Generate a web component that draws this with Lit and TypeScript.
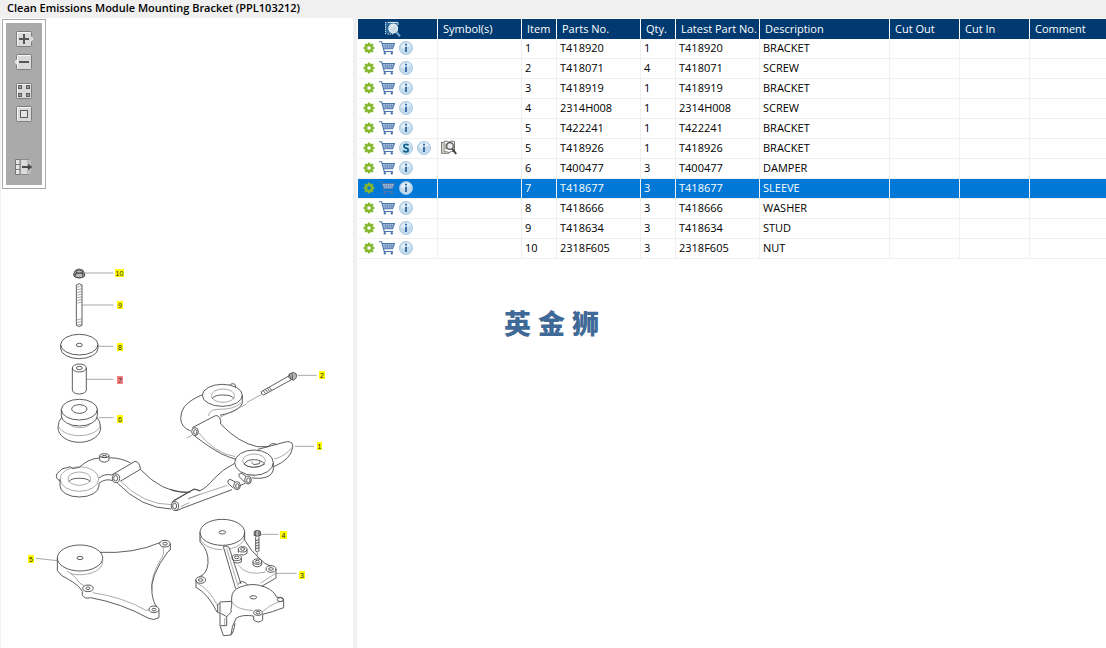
import { LitElement, html, css, svg } from "lit";
import { customElement, state } from "lit/decorators.js";
import { classMap } from "lit/directives/class-map.js";

interface Part {
  item: string;
  no: string;
  qty: number;
  name: string;
  super?: boolean;
}

const PARTS: Part[] = [
  { item: "1", no: "T418920", qty: 1, name: "BRACKET" },
  { item: "2", no: "T418071", qty: 4, name: "SCREW" },
  { item: "3", no: "T418919", qty: 1, name: "BRACKET" },
  { item: "4", no: "2314H008", qty: 1, name: "SCREW" },
  { item: "5", no: "T422241", qty: 1, name: "BRACKET" },
  { item: "5", no: "T418926", qty: 1, name: "BRACKET", super: true },
  { item: "6", no: "T400477", qty: 3, name: "DAMPER" },
  { item: "7", no: "T418677", qty: 3, name: "SLEEVE" },
  { item: "8", no: "T418666", qty: 3, name: "WASHER" },
  { item: "9", no: "T418634", qty: 3, name: "STUD" },
  { item: "10", no: "2318F605", qty: 3, name: "NUT" },
];

const gearIcon = html`<svg width="12" height="12" viewBox="0 0 12 12">
  <g fill="#84b62e">
    <rect x="4.8" y="0.6" width="2.4" height="10.8" />
    <rect x="0.6" y="4.8" width="10.8" height="2.4" />
    <rect x="4.8" y="0.6" width="2.4" height="10.8" transform="rotate(45 6 6)" />
    <rect x="4.8" y="0.6" width="2.4" height="10.8" transform="rotate(-45 6 6)" />
    <circle cx="6" cy="6" r="4" />
  </g>
  <circle class="hole" cx="6" cy="6" r="1.8" />
</svg>`;

const cartIcon = html`<svg width="16" height="14" viewBox="0 0 16 14">
  <path d="M3.5 2.5H15.5L13.5 8H5z" fill="#b9cde5" />
  <path d="M0 .8H2.7L5.2 10.5H14M3.2 2.5H15.5L13.5 7.8H4.6" fill="none" stroke="#4a75ab" stroke-width="1.1" />
  <path d="M3.7 4.3H14.8M4.2 6H14.3M6 2.5L6.8 8M8.2 2.5L8.6 8M10.4 2.5V8M12.8 2.5L12 8"
    fill="none" stroke="#5f87b8" stroke-width=".7" />
  <circle cx="5.8" cy="12.3" r="1.2" fill="#4a75ab" />
  <circle cx="12.8" cy="12.3" r="1.2" fill="#4a75ab" />
</svg>`;

const disc = svg`<circle cx="7" cy="7" r="6.6" fill="#c3dbed" stroke="#a3c3dd" stroke-width=".8" />
  <path d="M2 6A5.2 5.2 0 0 1 12 5Q8 5 7 7T2 6" fill="#e2eff8" />`;

const infoIcon = html`<svg width="14" height="14" viewBox="0 0 14 14">
  ${disc}
  <path d="M6 2.8H8V4.6H6zM6 5.8H8V11H6z" fill="#3a6ea5" />
</svg>`;

const superIcon = html`<svg width="14" height="14" viewBox="0 0 14 14">
  ${disc}
  <path d="M9.6 4.4Q8.6 3.3 7 3.3Q4.9 3.3 4.9 5T7 7T9.2 9T7 10.8Q5.3 10.8 4.3 9.6"
    fill="none" stroke="#0c6390" stroke-width="1.8" />
</svg>`;

const bookIcon = html`<svg width="16" height="15" viewBox="0 0 16 15">
  <path d="M3 1.5Q6 .5 7.5 2Q10 .5 13.5 1.5V11.5Q10 11 8 12.5Q5 11 3 12z" fill="#fff" stroke="#77736a" />
  <path d="M2.5 2.5H.7V13.3H8M5 3.5V9.5" fill="none" stroke="#6d6a62" stroke-width="1.1" />
  <circle cx="9" cy="6" r="3.3" fill="#e9edf0" stroke="#555" stroke-width="1.2" />
  <path d="M11.3 8.8L15.2 14" stroke="#444" stroke-width="2" />
</svg>`;

const previewIcon = html`<svg width="16" height="16" viewBox="0 0 16 16">
  <path d="M1 .5H13V12.5H1z" fill="#2b6b9d" />
  <path d="M.5 1V13M2.5 13H8M3 1.5H13" stroke="#d5e6f2" stroke-dasharray="1.4 .8" />
  <path d="M3 1.5H13V4" fill="none" stroke="#c7deee" />
  <circle cx="8.2" cy="7.5" r="4.3" fill="#c9dbe7" stroke="#edf4f8" stroke-width="1.2" />
  <path d="M5.5 6.5Q6.5 4.6 8.8 4.7" stroke="#fff" fill="none" />
  <path d="M11.3 11L15 15.3" stroke="#6fa3c7" stroke-width="2.2" />
</svg>`;

const plate = svg`<rect x="2.5" y=".5" width="15" height="15" rx="1" fill="#d9d9d9" stroke="#7d7d7d" />
  <path d="M3.5 14V1.5H16.5" fill="none" stroke="#f6f6f6" />`;

const toolIcons = {
  zoomIn: svg`${plate}<path d="M17 5.5L19 8L17 10.5" fill="#d9d9d9" stroke="#efefef" /><path d="M5 8H15M10 3V13" stroke="#555" stroke-width="2" />`,
  zoomOut: svg`${plate}<path d="M3 5.5L1 8L3 10.5" fill="#d9d9d9" stroke="#efefef" /><path d="M5 8H15" stroke="#555" stroke-width="2" />`,
  tiles: svg`${plate}<g fill="#999" stroke="#5c5c5c"><rect x="4.5" y="2.5" width="3" height="3" /><rect x="12.5" y="2.5" width="3" height="3" /><rect x="4.5" y="10.5" width="3" height="3" /><rect x="12.5" y="10.5" width="3" height="3" /></g>`,
  fit: svg`${plate}<rect x="6.5" y="4.5" width="7" height="7" fill="#e3e3e3" stroke="#5c5c5c" />`,
  panel: svg`<path d="M1.5 .5H6V15.5H1.5z" fill="#e6e6e6" stroke="#777" /><path d="M1 5.5H6M1 10.5H6" stroke="#777" />
    <path d="M7 1H13V15H7z" fill="#dadada" /><path d="M13 1H17V15H13z" fill="#bcbcbc" /><path d="M7 .5H15M7 15.5H15" stroke="#8a8a8a" />
    <path d="M8 8H16" stroke="#4a4a4a" stroke-width="2" /><path d="M14 4.8L18.3 8L14 11.2z" fill="#4a4a4a" />`,
};

/* Callouts: number, box position and width on the drawing */
const CALLOUTS: [string, number, number, number][] = [
  ["10", 115, 269, 9], ["9", 117, 301, 6], ["8", 117, 343, 6], ["7", 117, 376, 6],
  ["6", 117, 415, 6], ["2", 319, 371, 6], ["1", 317, 442, 5], ["5", 28, 555, 6],
  ["4", 280, 531, 7], ["3", 299, 571, 6],
];

const T = "scale(.3333)";

const artwork = svg`
  <g class="ink" transform="translate(50 260) ${T}">
    <path d="M71 42L76 31L87 27L99 31L104 42L103 48Q88 60 72 48z" fill="#bbb" />
    <ellipse cx="88" cy="35" rx="10" ry="5" /><ellipse cx="88" cy="46" rx="16" ry="7" />
    <path d="M79 34L77 48M96 34L99 49" />
    <path d="M79 75Q88 67 96 75V196Q88 203 79 196z" />
    <path class="thin" d="M79 82L96 78M79 90L96 86M79 98L96 94M79 106L96 102M79 114L96 110M79 122L96 118M79 130L96 126M79 180L96 176M79 188L96 184M79 196L96 192" />
    <ellipse cx="88" cy="254" rx="56" ry="31" /><path d="M32 254V265A56 31 0 0 0 144 265V254" />
    <ellipse cx="88" cy="255" rx="9" ry="5" />
    <ellipse cx="88" cy="324" rx="21" ry="12" /><ellipse cx="88" cy="324" rx="9" ry="5" />
    <path d="M67 324V390A21 12 0 0 0 109 390V324" />
    <ellipse cx="88" cy="449" rx="54" ry="31" /><ellipse cx="88" cy="447" rx="23" ry="13" />
    <path d="M34 449V467A54 31 0 0 0 142 467V449" />
    <path d="M35 472Q24 484 24 503A64 44 0 0 0 152 503Q151 483 141 472" /><path class="thin" d="M25 493A63 34 0 0 0 151 493" />
    <path class="thin" d="M56 491Q66 503 88 503Q112 503 122 491" />
    <path class="lead" d="M105 39H190M96 135H190M145 259H190M110 358H190M147 473H190" />
  </g>
  <g class="ink" transform="translate(170 360) ${T}">
    <ellipse cx="157" cy="106" rx="60" ry="33" /><ellipse class="thin" cx="159" cy="107" rx="35" ry="20" />
    <path d="M126 116Q135 104 160 105Q185 105 192 116M217 106V130Q208 150 174 160L150 166" />
    <path d="M180 76Q184 68 195 73L197 82M98 104Q62 118 43 140Q32 155 32 176Q33 202 62 213" />
    <path class="thin" d="M116 168Q116 150 142 148Q195 149 214 128" />
    <path d="M67 203L136 167Q148 165 152 182V192Q205 248 262 260H294L304 252Q312 248 320 254" />
    <ellipse cx="75" cy="215" rx="10" ry="12" /><ellipse cx="76" cy="216" rx="5" ry="7" />
    <path d="M74 228Q118 262 155 282Q180 293 198 298" /><path class="thin" d="M86 218Q130 278 196 290" />
    <path d="M264 268L294 260L350 245Q371 244 368 262Q364 297 312 320" /><path class="thin" d="M312 297Q345 290 366 262" />
    <ellipse cx="252" cy="308" rx="58" ry="38" /><ellipse class="thin" cx="252" cy="302" rx="34" ry="20" />
    <path d="M222 312Q232 298 253 299Q275 300 284 312Q270 322 250 322Q230 321 222 312M244 306L252 314L268 311L270 304" />
    <path d="M310 308V330Q304 353 270 355L245 354" />
    <path d="M194 310Q158 328 133 355Q108 385 90 392L72 387L10 422M15 452Q24 452 36 445L186 389M208 378L225 370" />
    <path d="M0 388Q32 400 62 396" /><path class="thin" d="M55 415L172 376M32 440L58 428M150 172L230 132" />
    <ellipse cx="15" cy="438" rx="11" ry="13" /><ellipse cx="14" cy="438" rx="6" ry="8" />
    <ellipse cx="201" cy="377" rx="10" ry="12" /><ellipse cx="202" cy="378" rx="5" ry="7" />
    <ellipse cx="234" cy="360" rx="10" ry="12" /><ellipse cx="235" cy="361" rx="5" ry="7" />
    <path d="M196 366L180 358Q171 360 174 370L190 384M228 349L213 339Q204 341 207 350L224 366" />
    <path class="thin" d="M238 348Q252 338 253 350" />
    <path d="M274 95L358 47M281 105L366 58M274 95Q273 103 281 105M280 92L287 101M286 88L293 97M292 85L299 94M298 82L305 91" />
    <path d="M358 42L370 37L379 42V53L371 61L362 57z" fill="#bbb" /><path d="M366 40L368 58M358 42L356 52L362 57" />
    <path class="lead" d="M383 46H440M375 259H432M230 128L275 103M50 234L66 226" />
  </g>
  <g class="ink" transform="translate(40 430) ${T}">
    <ellipse class="thin" cx="118" cy="147" rx="58" ry="37" /><ellipse class="thin" cx="118" cy="146" rx="34" ry="20" />
    <path d="M86 155Q95 144 118 145Q142 144 151 155M60 148V168A58.5 33 0 0 0 177 168V160Q197 144 218 152" />
    <path d="M60 152Q46 147 50 132L66 117L90 110L98 116L118 112Q145 86 178 84M208 83Q245 84 272 99" />
    <ellipse cx="193" cy="77" rx="14" ry="6" /><ellipse cx="193" cy="79" rx="7" ry="3" />
    <path d="M179 77V91Q193 102 207 91V77M177 144Q194 130 215 135L285 94Q300 95 301 118L242 153" />
    <ellipse cx="228" cy="145" rx="11" ry="13" /><ellipse cx="227" cy="145" rx="6" ry="8" />
    <path d="M301 118Q365 187 440 188M232 159Q305 235 393 237M395 217L458 180L466 178L480 183" />
    <path class="thin" d="M240 152Q310 225 395 224M444 207L480 193" />
  </g>
  <g class="ink" transform="translate(20 530) ${T}">
    <ellipse cx="180" cy="84" rx="68" ry="39" /><ellipse cx="180" cy="84" rx="9" ry="5" />
    <path class="thin" d="M248 84V96A68 39 0 0 1 152 131M140 123Q158 130 180 160L192 167M428 50Q437 68 420 92Q392 140 395 180M218 188Q310 202 378 241L388 240" />
    <path d="M112 84V122Q121 138 145 148Q176 165 187 184V196Q195 208 212 203Q305 220 386 265Q402 273 417 263V240M240 67Q340 72 420 38M451 41V60L443 66Q388 140 396 190Q400 218 411 232" />
    <ellipse cx="435" cy="41" rx="16" ry="10" /><ellipse cx="435" cy="41" rx="7" ry="4" />
    <ellipse cx="402" cy="238" rx="15" ry="10" /><ellipse cx="402" cy="239" rx="6" ry="4" />
    <ellipse cx="204" cy="175" rx="16" ry="10" /><ellipse cx="204" cy="175" rx="6" ry="4" />
    <path class="lead" d="M48 85L112 92" />
  </g>
  <g class="ink" transform="translate(185 510) ${T}">
    <ellipse cx="112" cy="67" rx="67" ry="39" /><ellipse cx="112" cy="67" rx="10" ry="5" />
    <path class="thin" d="M45 80A67 39 0 0 0 112 119M179 80A67 39 0 0 1 134 117" />
    <path d="M45 67V96Q72 122 69 160Q66 192 44 200M33 210V232Q68 250 96 306L104 310M179 67V90Q198 124 222 144Q240 164 256 168" />
    <ellipse cx="47" cy="210" rx="15" ry="10" /><ellipse cx="47" cy="210" rx="7" ry="4" />
    <path d="M115 110L152 236M122 108L132 112L168 222M115 110L122 108" /><path class="thin" d="M125 116L160 230M34 218Q75 238 98 288" />
    <ellipse cx="173" cy="118" rx="13" ry="8" /><ellipse cx="173" cy="117" rx="6" ry="4" /><path d="M160 118V128M186 118V130Q176 138 166 134" />
    <ellipse cx="155" cy="143" rx="14" ry="9" /><ellipse cx="155" cy="142" rx="7" ry="4" /><path d="M169 143V156Q158 162 148 157" />
    <ellipse cx="217" cy="155" rx="13" ry="8" /><ellipse cx="217" cy="155" rx="6" ry="4" /><path d="M204 155V165Q217 176 230 165V155" />
    <ellipse cx="258" cy="177" rx="15" ry="10" /><ellipse cx="258" cy="177" rx="7" ry="4" /><path d="M273 177V204L230 229" />
    <path class="thin" d="M272 190L226 220M160 165Q185 200 242 186" />
    <path d="M160 222Q172 206 188 225" />
    <path d="M140 264Q140 240 166 231Q203 216 240 231Q268 243 275 262L286 262Q297 264 296 272V293Q276 300 262 305L233 313V330Q220 342 206 330V318Q172 313 154 324Q139 348 138 375L115 377L105 346V278L98 284V306" />
    <path d="M140 264V286Q136 300 139 306M105 276L140 274M125 320V347H107M138 375Q146 368 150 340M107 310L125 320L139 306" />
    <path class="thin" d="M141 275Q150 298 204 302M233 305Q252 286 278 277L296 272M119 324V345M141 350L148 342" />
    <ellipse cx="205" cy="262" rx="10" ry="5" /><ellipse cx="286" cy="269" rx="9" ry="6" /><ellipse cx="219" cy="308" rx="13" ry="8" /><ellipse cx="219" cy="308" rx="6" ry="4" />
    <path d="M208 64Q217 58 226 64L227 76Q217 82 207 76z" fill="#bbb" /><path d="M212 63V78M222 63V78M212 80V123Q217 128 222 123V80M212 92L222 89M212 100L222 97M212 108L222 105M212 116L222 113" />
    <path class="lead" d="M228 73H280M272 190H335M217 127V148" />
  </g>`;

@customElement("app-root")
export class AppRoot extends LitElement {
  @state() private selected = 7;

  static styles = css`
    :host {
      display: flex;
      flex-direction: column;
      min-height: 100vh;
      background: #fff;
      color: #000;
      font: 11px/16px "Open Sans", "Noto Sans", sans-serif;
    }
    .title {
      margin: 0;
      padding: 0 7px 2px;
      background: #f0f0f0;
      font-size: 11px;
      line-height: 16px;
      font-weight: 600;
    }
    .panes {
      flex: 1;
      display: grid;
      grid-template-columns: minmax(0, 353fr) 4px minmax(0, 749fr);
    }
    .viewer {
      position: relative;
      border-left: 1px solid #f0f0f0;
    }
    .splitter {
      background: #f0f0f0;
    }
    .drawing {
      display: block;
      width: 100%;
    }
    .ink {
      fill: none;
      stroke: #444;
      stroke-width: 2.6;
      stroke-linejoin: round;
    }
    .thin {
      stroke: #8c8c8c;
      stroke-width: 2.2;
    }
    .lead {
      stroke: #888;
      stroke-width: 2.2;
    }
    .tag {
      fill: #ff0;
    }
    .tag.on {
      fill: #f08080;
    }
    .num {
      font: 7px "Liberation Sans", sans-serif;
      text-anchor: middle;
      fill: #222;
    }
    .tools {
      position: absolute;
      top: 1px;
      left: 1px;
      padding: 3px;
      border: 1px solid #aaa;
      background: #fff;
    }
    .strip {
      display: flex;
      flex-direction: column;
      gap: 7px;
      padding: 8px 8px 10px;
      background: #aaa;
    }
    .gap {
      margin-top: 6px;
    }
    .far {
      margin-top: 30px;
    }
    button {
      display: block;
      padding: 0;
      border: 0;
      background: none;
      cursor: pointer;
    }
    svg {
      display: block;
    }
    .list {
      padding: 1px 0 0 1px;
    }
    table {
      width: 100%;
      table-layout: fixed;
      border-collapse: separate;
      border-spacing: 0;
    }
    .c35 { width: 35px; }
    .c70 { width: 70px; }
    .c80 { width: 80px; }
    .c84 { width: 84px; }
    .c130 { width: 130px; }
    th,
    td {
      box-sizing: border-box;
      height: 20px;
      padding: 0 0 0 3px;
      overflow: hidden;
      white-space: nowrap;
      text-align: left;
      vertical-align: middle;
      border-right: 1px solid #f0f0f0;
    }
    th {
      padding-left: 5px;
      background: #003a70;
      color: #fff;
      font-weight: 400;
      border-right-color: #fff;
    }
    th:last-child,
    td:last-child {
      border-right: 0;
    }
    td {
      padding-bottom: 2px;
      border-bottom: 1px solid #f0f0f0;
    }
    .preview {
      padding-left: 27px;
    }
    .hole {
      fill: #fff;
    }
    .sel td {
      background: #0078d7;
      color: #fff;
    }
    .sel .hole {
      fill: #0078d7;
    }
    .acts {
      display: flex;
      align-items: center;
      gap: 4px;
      padding-left: 2px;
    }
    .brand {
      display: flex;
      gap: 7px;
      margin: 44px 0 0 146px;
      color: #3f6996;
      font: 900 27px/40px "Noto Sans CJK SC", sans-serif;
    }
  `;

  private tool(icon: unknown, label: string, cls = "") {
    return html`<button class=${cls} aria-label=${label}>
      <svg width="20" height="16" viewBox="0 0 20 16">${icon}</svg>
    </button>`;
  }

  private row(p: Part, i: number) {
    return html`<tr class=${classMap({ sel: i === this.selected })} @click=${() => (this.selected = i)}>
      <td>
        <div class="acts">
          <button aria-label="Options">${gearIcon}</button>
          <button aria-label="Add to cart">${cartIcon}</button>
          ${p.super ? html`<button aria-label="Supersession">${superIcon}</button>` : ""}
          <button aria-label="Information">${infoIcon}</button>
        </div>
      </td>
      <td>${p.super ? bookIcon : ""}</td>
      <td>${p.item}</td>
      <td>${p.no}</td>
      <td>${p.qty}</td>
      <td>${p.no}</td>
      <td>${p.name}</td>
      <td></td>
      <td></td>
      <td></td>
    </tr>`;
  }

  render() {
    const active = PARTS[this.selected].item;
    return html`
      <h1 class="title">Clean Emissions Module Mounting Bracket (PPL103212)</h1>
      <main class="panes">
        <section class="viewer">
          <svg class="drawing" viewBox="1 18 352 630">
            ${artwork}
            ${CALLOUTS.map(
              ([n, x, y, w]) => svg`<rect class=${classMap({ tag: true, on: n === active })} x=${x} y=${y} width=${w} height="8" />
                <text class="num" x=${x + w / 2} y=${y + 6.5}>${n}</text>`
            )}
          </svg>
          <div class="tools">
            <div class="strip">
              ${this.tool(toolIcons.zoomIn, "Zoom in")}
              ${this.tool(toolIcons.zoomOut, "Zoom out")}
              ${this.tool(toolIcons.tiles, "Tiles", "gap")}
              ${this.tool(toolIcons.fit, "Fit")}
              ${this.tool(toolIcons.panel, "Toggle panel", "far")}
            </div>
          </div>
        </section>
        <div class="splitter"></div>
        <section class="list">
          <table>
            <colgroup>
              <col class="c80" /><col class="c84" /><col class="c35" /><col class="c84" /><col class="c35" />
              <col class="c84" /><col class="c130" /><col class="c70" /><col class="c70" /><col />
            </colgroup>
            <thead>
              <tr>
                <th class="preview">${previewIcon}</th>
                <th>Symbol(s)</th>
                <th>Item</th>
                <th>Parts No.</th>
                <th>Qty.</th>
                <th>Latest Part No.</th>
                <th>Description</th>
                <th>Cut Out</th>
                <th>Cut In</th>
                <th>Comment</th>
              </tr>
            </thead>
            <tbody>
              ${PARTS.map((p, i) => this.row(p, i))}
            </tbody>
          </table>
          <div class="brand"><span>英</span><span>金</span><span>狮</span></div>
        </section>
      </main>
    `;
  }
}
